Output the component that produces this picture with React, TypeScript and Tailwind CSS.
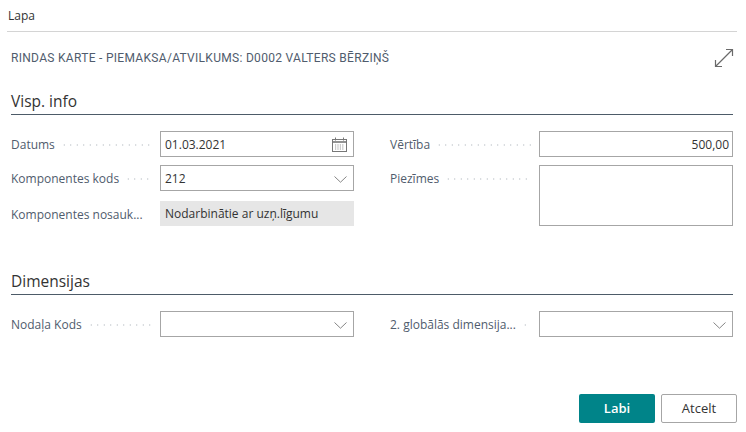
function Leader() {
  return (
    <div className="flex-1 min-w-0 h-[2px] ml-[6px] mr-[8px] mt-[2px] bg-[radial-gradient(circle,#cdd0d4_0.7px,transparent_0.9px)] bg-[length:6.5px_2px]" />
  )
}

function Label({ text, tall }: { text: string; tall?: boolean }) {
  return (
    <div className={"w-[149px] flex items-center text-[12px] text-[#505c6d] " + (tall ? "h-[26px]" : "")}>
      <span className="whitespace-nowrap pt-[2px]">{text}</span>
      <Leader />
    </div>
  )
}

function Field({ label, children, top }: { label: string; children: React.ReactNode; top?: boolean }) {
  return (
    <div className={"flex " + (top ? "items-start" : "items-center")}>
      <Label text={label} tall={top} />
      <div className="w-[194px]">{children}</div>
    </div>
  )
}

function Box({ children, right }: { children?: React.ReactNode; right?: React.ReactNode }) {
  return (
    <div className="h-[26px] border border-[#a6a6a6] bg-white flex items-center justify-between pl-[4px] pr-[6px] text-[12px] text-[#333]">
      <span className="pt-[2px]">{children}</span>
      {right}
    </div>
  )
}

function Chevron() {
  return (
    <svg width="13" height="7" viewBox="0 0 13 7" fill="none" stroke="#777" strokeWidth="0.9" className="mt-[2px]">
      <path d="M0.5 0.5L6.5 6.2L12.5 0.5" />
    </svg>
  )
}

function CalendarIcon() {
  return (
    <svg width="15" height="15" viewBox="0 0 15 15" fill="none" stroke="#777" strokeWidth="1">
      <rect x="0.5" y="2.5" width="14" height="12" />
      <path d="M0.5 5h14" strokeWidth="1.6" />
      <path d="M3.5 0.5v3M11.5 0.5v3" />
      <path d="M3 8h9M3 10h9M3 12h9" strokeDasharray="1.2 1.2" stroke="#999" />
    </svg>
  )
}

function Section({ title, children }: { title: string; children: React.ReactNode }) {
  return (
    <div>
      <div className="h-[22px] text-[15.5px] leading-[22px] font-medium text-[#333] border-b border-[#4d5b68] box-content pb-[2px]">
        {title}
      </div>
      {children}
    </div>
  )
}

export default function App() {
  return (
    <div className="w-[746px] h-[432px] bg-white overflow-hidden font-['Open_Sans',sans-serif]">
      <div className="mx-[7px] w-[730px] h-[32px] border-b border-[#d4d4d4] pl-[1px] pt-[6px] text-[12px] leading-[20px] text-[#333]">
        Lapa
      </div>

      <div className="mx-[11px] mt-[16px] h-[20px] flex items-center justify-between">
        <span className="text-[12px] tracking-[0.3px] font-['Roboto',sans-serif] text-[#505c6d]">
          RINDAS KARTE - PIEMAKSA/ATVILKUMS: D0002 VALTERS BĒRZIŅŠ
        </span>
        <svg width="20" height="20" viewBox="0 0 20 20" fill="none" stroke="#6a6a6a" strokeWidth="1.2" className="mr-[1px] mb-[1px]">
          <path d="M1.5 18.5L18.5 1.5M12 1.5h6.5v6.5M1.5 12v6.5H8" />
        </svg>
      </div>

      <div className="mx-[11px] w-[722px] mt-[22px]">
        <Section title="Visp. info">
          <div className="flex justify-between mt-[16px] h-[95px]">
            <div className="flex flex-col">
              <Field label="Datums">
                <Box right={<CalendarIcon />}>01.03.2021</Box>
              </Field>
              <div className="mt-[8px]">
                <Field label="Komponentes kods">
                  <Box right={<Chevron />}>212</Box>
                </Field>
              </div>
              <div className="flex items-center mt-[10px]">
                <Label text="Komponentes nosauk..." />
                <div className="w-[194px] h-[25px] bg-[#e6e6e6] pl-[5px] flex items-center text-[12px] text-[#333]">
                  Nodarbinātie ar uzņ.līgumu
                </div>
              </div>
            </div>
            <div className="flex flex-col gap-[8px]">
              <Field label="Vērtība">
                <div className="h-[26px] border border-[#a6a6a6] flex items-center justify-end pr-[3px] pt-[2px] text-[12px] text-[#333]">
                  500,00
                </div>
              </Field>
              <Field label="Piezīmes" top>
                <div className="h-[61px] border border-[#a6a6a6]" />
              </Field>
            </div>
          </div>
        </Section>

        <div className="mt-[44px]">
          <Section title="Dimensijas">
            <div className="flex justify-between mt-[16px]">
              <Field label="Nodaļa Kods">
                <Box right={<Chevron />} />
              </Field>
              <Field label="2. globālās dimensija...">
                <Box right={<Chevron />} />
              </Field>
            </div>
          </Section>
        </div>
      </div>

      <div className="mx-[9px] mt-[57px] flex justify-end gap-[6px]">
        <button className="w-[76px] h-[29px] rounded-[2px] bg-[#008489] text-white text-[13px] font-semibold">Labi</button>
        <button className="w-[76px] h-[29px] rounded-[2px] border border-[#a6a6a6] bg-white text-[#333] text-[13px]">Atcelt</button>
      </div>
    </div>
  )
}
